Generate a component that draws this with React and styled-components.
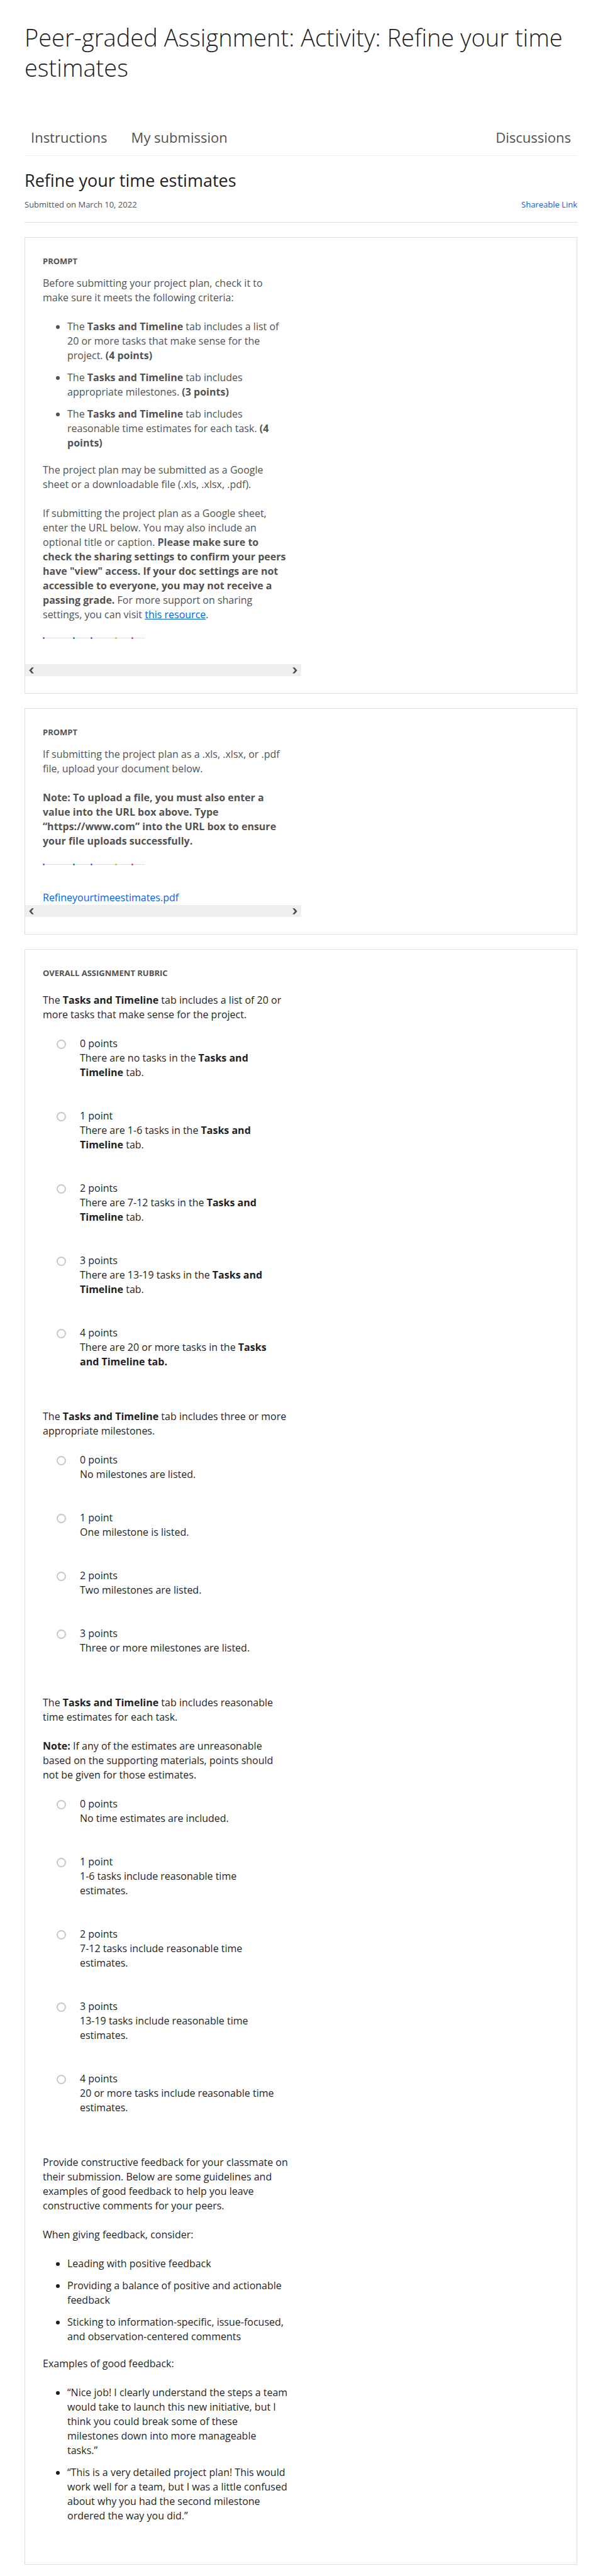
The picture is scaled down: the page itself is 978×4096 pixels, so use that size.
import React from 'react';
import styled, { createGlobalStyle } from 'styled-components';

const GlobalStyle = createGlobalStyle`
  * { box-sizing: border-box; }
  body {
    margin: 0;
    background: #fff;
    color: #1f1f1f;
    font-family: "Open Sans", "Noto Sans", sans-serif;
    font-size: 16px;
    line-height: 23px;
  }
  h1, h2, h3, p, ul { margin: 0; padding: 0; }
`;

const Page = styled.main`
  padding: 35px 60px 18px 39px;
`;

const Title = styled.h1`
  font-size: 38px;
  font-weight: 300;
  line-height: 48px;
`;

const Tabs = styled.nav`
  display: flex;
  gap: 38px;
  margin-top: 72px;
  padding: 0 10px 14px;
  border-bottom: 1px solid #efefef;
`;

const Tab = styled.a`
  color: #525252;
  font-size: 22px;
  line-height: 30px;
  text-decoration: none;
  margin-left: ${({ $end }) => ($end ? 'auto' : '0')};
`;

const Heading = styled.h2`
  margin-top: 21px;
  font-size: 27px;
  font-weight: 400;
  line-height: 36px;
`;

const Meta = styled.div`
  display: flex;
  justify-content: space-between;
  margin-top: 10px;
  padding-bottom: 18px;
  border-bottom: 1px solid #dcdcdc;
  color: #525252;
  font-size: 13px;
  line-height: 20px;
`;

const Link = styled.a`
  color: #0062e4;
  text-decoration: ${({ $underlined }) => ($underlined ? 'underline' : 'none')};
`;

const Cards = styled.div`
  display: flex;
  flex-direction: column;
  gap: 23px;
  margin-top: 23px;
`;

const Card = styled.section`
  padding: 27px 0 ${({ $roomy }) => ($roomy ? '68px' : '27px')};
  border: 1px solid #e0e0e0;
`;

const Column = styled.div`
  width: 50%;
  padding: 0 20px 0 28px;
  color: ${({ $muted }) => ($muted ? '#525252' : '#1f1f1f')};
`;

const Label = styled.h3`
  margin-bottom: ${({ $spaced }) => ($spaced ? '22px' : '14px')};
  color: #525252;
  font-size: 13px;
  font-weight: 700;
  line-height: 20px;
  text-transform: uppercase;
`;

const Copy = styled.div`
  display: flex;
  flex-direction: column;
  gap: 23px;
`;

const Bullets = styled.ul`
  display: flex;
  flex-direction: column;
  gap: 12px;
  margin-bottom: -3px;
  padding-left: 39px;
`;

const Divider = styled.svg`
  display: block;
  margin: 24px 0 39px;
`;

const Scrollbar = styled.div`
  display: flex;
  justify-content: space-between;
  width: 50%;
  height: 19px;
  background: #efefef;
`;

const Arrow = styled.button`
  display: flex;
  align-items: center;
  justify-content: center;
  width: 19px;
  padding: 0;
  border: 0;
  background: none;
`;

const Criterion = styled.section`
  margin-bottom: 64px;
`;

const Options = styled.div`
  display: flex;
  flex-direction: column;
  gap: 46px;
  margin-top: 23px;
  padding: 0 10px 0 22px;
`;

const Option = styled.label`
  display: flex;
  align-items: flex-start;
  gap: 22px;
`;

const Radio = styled.input`
  appearance: none;
  flex: none;
  width: 15px;
  height: 15px;
  margin: 5px 0 0;
  border: 2px solid #c7c7cf;
  border-radius: 50%;
  background: #fff;
  &:checked { border: 4px solid #0062e4; }
`;

const OptionText = styled.span`
  display: flex;
  flex-direction: column;
`;

const DOTS = [
  [2, '#4472c4'],
  [50, '#0f9d58'],
  [78, '#4472c4'],
  [117, '#fbb400'],
  [143, '#ea4335'],
];

function DottedRule() {
  return (
    <Divider width="162" height="4" viewBox="0 0 162 4" aria-hidden="true">
      <rect x="0" y="1" width="162" height="1" fill="#e2e2e2" />
      {DOTS.map(([x, color]) => (
        <circle key={x} cx={x - 0.5} cy="1.5" r="1.5" fill={color} />
      ))}
    </Divider>
  );
}

function HorizontalScroll() {
  return (
    <Scrollbar>
      <Arrow type="button" aria-label="Scroll left">
        <svg width="8" height="10" viewBox="0 0 8 10">
          <path d="M0.3 5 L4.6 0.3 H7.8 L4 5 L7.8 9.7 H4.6 Z" fill="#505050" />
        </svg>
      </Arrow>
      <Arrow type="button" aria-label="Scroll right">
        <svg width="8" height="10" viewBox="0 0 8 10">
          <path d="M7.7 5 L3.4 0.3 H0.2 L4 5 L0.2 9.7 H3.4 Z" fill="#505050" />
        </svg>
      </Arrow>
    </Scrollbar>
  );
}

const TT = <strong>Tasks and Timeline</strong>;

const CRITERIA = [
  {
    id: 'tasks',
    intro: [<>The {TT} tab includes a list of 20 or more tasks that make sense for the project.</>],
    options: [
      ['0 points', <>There are no tasks in the {TT} tab.</>],
      ['1 point', <>There are 1-6 tasks in the {TT} tab.</>],
      ['2 points', <>There are 7-12 tasks in the {TT} tab.</>],
      ['3 points', <>There are 13-19 tasks in the {TT} tab.</>],
      ['4 points', <>There are 20 or more tasks in the <strong>Tasks and Timeline tab.</strong></>],
    ],
  },
  {
    id: 'milestones',
    intro: [<>The {TT} tab includes three or more appropriate milestones.</>],
    options: [
      ['0 points', 'No milestones are listed.'],
      ['1 point', 'One milestone is listed.'],
      ['2 points', 'Two milestones are listed.'],
      ['3 points', 'Three or more milestones are listed.'],
    ],
  },
  {
    id: 'estimates',
    intro: [
      <>The {TT} tab includes reasonable time estimates for each task.</>,
      <><strong>Note:</strong> If any of the estimates are unreasonable based on the supporting materials, points should not be given for those estimates.</>,
    ],
    options: [
      ['0 points', 'No time estimates are included.'],
      ['1 point', '1-6 tasks include reasonable time estimates.'],
      ['2 points', '7-12 tasks include reasonable time estimates.'],
      ['3 points', '13-19 tasks include reasonable time estimates.'],
      ['4 points', '20 or more tasks include reasonable time estimates.'],
    ],
  },
];

function RubricCriterion({ id, intro, options }) {
  return (
    <Criterion>
      <Copy id={`${id}-intro`}>
        {intro.map((text, i) => <p key={i}>{text}</p>)}
      </Copy>
      <Options role="radiogroup" aria-labelledby={`${id}-intro`}>
        {options.map(([points, text]) => (
          <Option key={points}>
            <Radio type="radio" name={id} value={points} />
            <OptionText>
              <span>{points}</span>
              <span>{text}</span>
            </OptionText>
          </Option>
        ))}
      </Options>
    </Criterion>
  );
}

export default function App() {
  return (
    <>
      <GlobalStyle />
      <Page>
        <Title>Peer-graded Assignment: Activity: Refine your time estimates</Title>
        <Tabs>
          <Tab href="#instructions">Instructions</Tab>
          <Tab href="#submission">My submission</Tab>
          <Tab href="#discussions" $end>Discussions</Tab>
        </Tabs>
        <Heading>Refine your time estimates</Heading>
        <Meta>
          <span>Submitted on March 10, 2022</span>
          <Link href="#share">Shareable Link</Link>
        </Meta>
        <Cards>
          <Card>
            <Column $muted>
              <Label>Prompt</Label>
              <Copy>
                <p>Before submitting your project plan, check it to make sure it meets the following criteria:</p>
                <Bullets>
                  <li>The {TT} tab includes a list of 20 or more tasks that make sense for the project. <strong>(4 points)</strong></li>
                  <li>The {TT} tab includes appropriate milestones. <strong>(3 points)</strong></li>
                  <li>The {TT} tab includes reasonable time estimates for each task. <strong>(4 points)</strong></li>
                </Bullets>
                <p>The project plan may be submitted as a Google sheet or a downloadable file (.xls, .xlsx, .pdf).</p>
                <p>
                  If submitting the project plan as a Google sheet, enter the URL below. You may also include an
                  optional title or caption. <strong>Please make sure to check the sharing settings to confirm
                  your peers have "view" access. If your doc settings are not accessible to everyone, you may not
                  receive a passing grade.</strong> For more support on sharing settings, you can
                  visit <Link href="#resource" $underlined>this resource</Link>.
                </p>
              </Copy>
              <DottedRule />
            </Column>
            <HorizontalScroll />
          </Card>
          <Card>
            <Column $muted>
              <Label>Prompt</Label>
              <Copy>
                <p>If submitting the project plan as a .xls, .xlsx, or .pdf file, upload your document below.</p>
                <p>
                  <strong>Note: To upload a file, you must also enter a value into the URL box above. Type
                  “https://www.com” into the URL box to ensure your file uploads successfully.</strong>
                </p>
              </Copy>
              <DottedRule />
              <p><Link href="#file">Refineyourtimeestimates.pdf</Link></p>
            </Column>
            <HorizontalScroll />
          </Card>
          <Card $roomy>
            <Column>
              <Label $spaced>Overall assignment rubric</Label>
              {CRITERIA.map((c) => <RubricCriterion key={c.id} {...c} />)}
              <Copy>
                <p>
                  Provide constructive feedback for your classmate on their submission. Below are some guidelines
                  and examples of good feedback to help you leave constructive comments for your peers.
                </p>
                <p>When giving feedback, consider:</p>
                <Bullets>
                  <li>Leading with positive feedback</li>
                  <li>Providing a balance of positive and actionable feedback</li>
                  <li>Sticking to information-specific, issue-focused, and observation-centered comments</li>
                </Bullets>
                <p>Examples of good feedback:</p>
                <Bullets>
                  <li>
                    “Nice job! I clearly understand the steps a team would take to launch this new initiative, but
                    I think you could break some of these milestones down into more manageable tasks.”
                  </li>
                  <li>
                    “This is a very detailed project plan! This would work well for a team, but I was a little
                    confused about why you had the second milestone ordered the way you did.”
                  </li>
                </Bullets>
              </Copy>
            </Column>
          </Card>
        </Cards>
      </Page>
    </>
  );
}
